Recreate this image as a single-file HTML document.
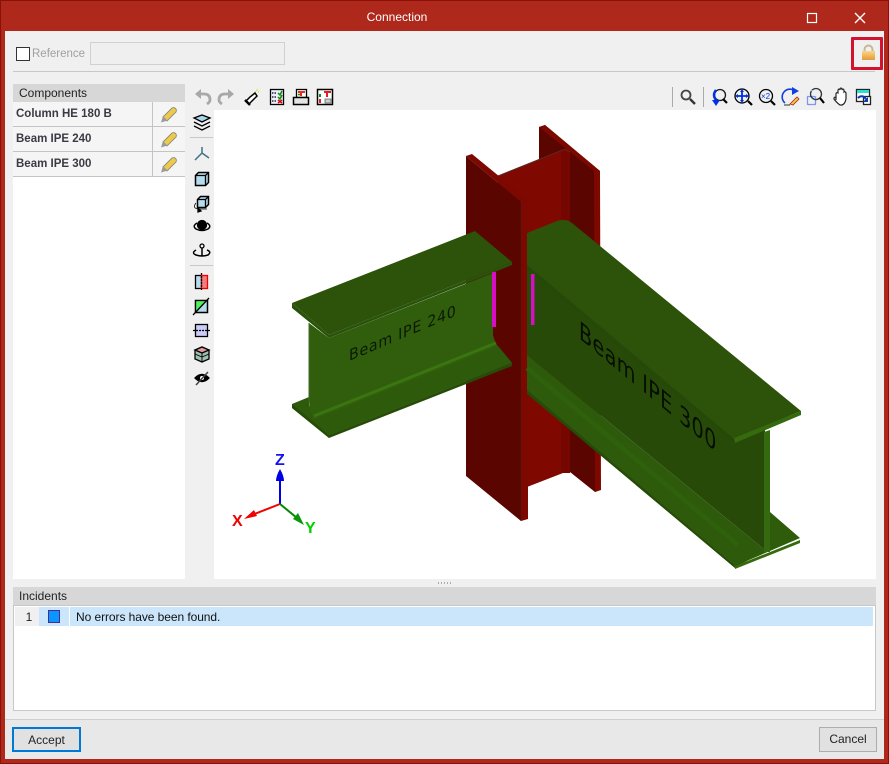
<!DOCTYPE html>
<html><head><meta charset="utf-8"><title>Connection</title>
<style>
html,body{margin:0;padding:0;width:889px;height:764px;overflow:hidden;background:#ae281c;font-family:"Liberation Sans",sans-serif;font-size:12px;color:#222}
div{position:absolute;box-sizing:border-box;white-space:nowrap}
svg{position:absolute;overflow:visible}
.row{left:13px;width:172px;height:25px;background:#f5f5f5;border-bottom:1px solid #c4c4c4;font-weight:bold;font-size:11.5px;color:#3a3a44;line-height:25px;padding-left:3px}
.vs{width:1px;background:#aaa}
.btn{background:#e1e1e1;text-align:center;color:#222}
</style></head><body>
<div style="left:0;top:0;width:889px;height:764px;border:1px solid #8c100a;background:#ae281c"></div>
<div style="left:0;top:1px;width:794px;text-align:center;color:#fff;line-height:33px;height:33px">Connection</div>
<svg style="left:0;top:0" width="889" height="764">
<rect x="807.5" y="13.5" width="9" height="9" fill="none" stroke="#fff" stroke-width="1.2"/>
<path d="M855 13L865 23M865 13L855 23" stroke="#fff" stroke-width="1.4" fill="none"/>
</svg>
<div style="left:5px;top:31px;width:879px;height:728px;background:#f0f0f0"></div>
<!-- top row -->
<div style="left:16px;top:47px;width:14px;height:14px;border:1px solid #333;background:#fff"></div>
<div style="left:32px;top:47px;color:#a0a0a0;line-height:14px;font-size:11.5px">Reference</div>
<div style="left:90px;top:42px;width:195px;height:23px;border:1px solid #d0d0d0;background:#efefef"></div>
<div style="left:13px;top:71px;width:862px;height:1px;background:#c8c8c8"></div>
<div style="left:851px;top:37px;width:32px;height:33px;border:3px solid #d3132d;border-radius:1px"></div>
<svg style="left:0;top:0" width="889" height="764">
<defs><linearGradient id="lk" x1="0" x2="0" y1="0" y2="1"><stop offset="0" stop-color="#fbd58b"/><stop offset="1" stop-color="#e59a37"/></linearGradient></defs>
<path d="M864.500 51V49.500a4 4 0 0 1 8 0V51" fill="none" stroke="#c4b79c" stroke-width="2"/>
<rect x="862" y="51" width="13" height="9" fill="url(#lk)"/>
</svg>
<!-- components -->
<div style="left:13px;top:84px;width:172px;height:18px;background:#d7d7d7;padding-left:6px;line-height:18px;color:#222">Components</div>
<div style="left:13px;top:102px;width:172px;height:477px;background:#fff"></div>
<div class="row" style="top:102px">Column HE 180 B</div>
<div class="row" style="top:127px">Beam IPE 240</div>
<div class="row" style="top:152px">Beam IPE 300</div>
<div style="left:152px;top:102px;width:1px;height:75px;background:#c4c4c4"></div>
<svg style="left:0;top:0" width="889" height="764">
<g id="p1"><path d="M163 117L172 108Q174 107 175.500 108.500Q177 110 176 112L167 121Z" fill="#eecb45" stroke="#8a8a8a" stroke-width=".9"/><path d="M161 122.500L163 116L167.500 120.500Z" fill="#9a9a9a"/></g>
<use href="#p1" y="25"/><use href="#p1" y="50"/>
</svg>
<!-- viewport -->
<div style="left:214px;top:110px;width:662px;height:469px;background:#fff"></div>
<svg style="left:0;top:0" width="889" height="764" font-family="'DejaVu Sans',sans-serif">
<!-- column back flange -->
<polygon points="539,127 545,125 600,171 600,490 595,492 570,472 539,440" fill="#5a0500"/>
<polygon points="594,171 600,171 601,490 595,492" fill="#7c0800"/>
<polygon points="545,125 600,171 594,171 539,127" fill="#7c0800"/>
<!-- web -->
<polygon points="498,176 565,149 570,152 570,472 563,473 527,487 498,490" fill="#7f0800"/>
<polygon points="561,150 570,152 570,473 561,473" fill="#760700"/>
<path d="M498,176 L565,149 L570,152" stroke="#5a2a22" stroke-width="1" fill="none"/>
<!-- column front flange -->
<polygon points="466,156 472,154 528,200 521,202" fill="#7c0800"/>
<polygon points="466,156 521,202 521,521 466,476" fill="#5a0500"/>
<polygon points="521,202 528,200 528,519 521,521" fill="#7c0800"/>
<path d="M521,202V521" stroke="#4d1b14" stroke-width=".6"/>
<!-- beam 240 -->
<polygon points="292,404 309,397 309,405 313,418 329,435 329,438 292,408" fill="#2e5a0b"/>
<polygon points="292,404 329,435 329,438 292,408" fill="#274c08"/>
<path d="M309,323 L329,338 L493,273 L493,335 Q495,345 503,352 L512,363 L329,435 L314,420 Q309,412 309,400 Z" fill="#315e0c"/>
<path d="M314,420 L329,435 L512,363 L503,352 L498,346 Z" fill="#2d5a0b"/>
<path d="M314,416 L496,343" stroke="#3b7511" stroke-width="3" fill="none"/>
<polygon points="329,435 512,363 512,366 329,438" fill="#274c08"/>
<path d="M309,323V402" stroke="#436a2e" stroke-width="1"/>
<polygon points="292,303 475,231 512,262 329,335" fill="#2c5309"/>
<polygon points="292,303 329,335 512,262 512,265 329,338 292,308" fill="#2a520a"/>
<text transform="matrix(.92,-.39,0,1,349,361)" font-size="15.500" fill="#0b1a04" letter-spacing=".75">Beam IPE 240</text>
<rect x="492" y="272" width="4" height="55" fill="#d60fc4"/>
<!-- beam 300 -->
<polygon points="527,255 740,434 765,425 765,550 527,355" fill="#274a09"/>
<polygon points="527,355 765,550 735,568 527,392" fill="#2d5a0b"/>
<path d="M527,368 L738,545" stroke="#2f600b" stroke-width="5" fill="none"/>
<polygon points="527,390 734,565 735,568 527,394" fill="#264a08"/>
<polygon points="527,262 734,436 735,444 527,270" fill="#264808"/>
<polygon points="770,512 800,538 735,566 764,548 770,546" fill="#2e5c0b"/>
<polygon points="764,432 770,430 770,552 764,552" fill="#366a10"/>
<polygon points="735,566 800,540 800,543 735,569" fill="#356a0e"/>
<path d="M527,233 L557,221 Q565,218 572,223 L801,411 L734,439 L527,265 Z" fill="#2c5309"/>
<polygon points="734,438 801,411 801,415 735,443" fill="#356a0e"/>
<text transform="matrix(.77,.64,0,1,579,338)" font-size="25" fill="#060e02" letter-spacing=".4">Beam IPE 300</text>
<rect x="531" y="274" width="3.500" height="51" fill="#d60fc4"/>
<!-- axes -->
<g font-family="'Liberation Sans',sans-serif" font-weight="bold">
<path d="M280,504V478" stroke="#0000e6" stroke-width="2"/><path d="M280,469Q284,476 284,481H276Q276,476 280,469Z" fill="#0000e6"/>
<text x="275" y="465" font-size="16" fill="#1414f0">Z</text>
<path d="M280,504L252,515" stroke="#f00000" stroke-width="2"/><path d="M244,519L254,510L257,516Z" fill="#f00000"/>
<text x="232" y="526" font-size="16" fill="#f00000">X</text>
<path d="M280,504L297,518" stroke="#008a00" stroke-width="2"/><path d="M304,525L293,519L298,513Z" fill="#0a960a"/>
<text x="305" y="533" font-size="16" fill="#00d000">Y</text>
</g>
</svg>
<!-- toolbar separators -->
<div class="vs" style="left:672px;top:87px;height:20px"></div>
<div class="vs" style="left:703px;top:87px;height:20px"></div>
<div style="left:190px;top:137px;width:23px;height:1px;background:#c8c8c8"></div>
<div style="left:190px;top:265px;width:23px;height:1px;background:#c8c8c8"></div>
<svg style="left:0;top:0" width="889" height="764" fill="none" stroke="#000" stroke-width="1.300">
<!-- undo/redo -->
<path d="M200,94H204Q210,94 210,100Q210,102 207,104" stroke="#a8a8a8" stroke-width="2.800"/><path d="M195,94L201,89V99Z" fill="#a8a8a8" stroke="none"/>
<path d="M229,94H225Q219,94 219,100Q219,102 222,104" stroke="#a8a8a8" stroke-width="2.800"/><path d="M234,94L228,89V99Z" fill="#a8a8a8" stroke="none"/>
<!-- brush -->
<path d="M246,101L250,97L255,93L257,96L253,100L249,104Z" fill="#fff" stroke-width="1.500"/><path d="M245,100L250,105" stroke-width="2.400"/><path d="M255,92L258,89M258,92L260,91" stroke="#d8d020" stroke-dasharray="1 1"/>
<!-- list -->
<rect x="270.500" y="89.500" width="13" height="15" fill="#eef"/><path d="M272,93H276M272,97H276M272,101H276" stroke-dasharray="1.500 1"/><path d="M278,93L280,95L282,91M278,97L280,99L282,95" stroke="#0a8a0a" stroke-width="1.500"/><path d="M278,100L282,103M282,100L278,103" stroke="#e00000" stroke-width="1.500"/>
<!-- printer -->
<rect x="296.500" y="89.500" width="10" height="8" fill="#fff"/><path d="M298,92H305M301,92V96" stroke="#e03020" stroke-width="2"/><path d="M298,94.500l2,0" stroke="#0a8a0a" stroke-width="1.500"/><rect x="293.500" y="97.500" width="15" height="7" fill="#e4e4e4" stroke-width="1.500"/>
<!-- plan -->
<rect x="317.500" y="89.500" width="15" height="15" fill="#fff" stroke-width="1.500"/><path d="M324,92H331M327,92V97" stroke="#e02020" stroke-width="2"/><path d="M320,94V97" stroke="#0a8a3a" stroke-width="2"/><path d="M320,99V103" stroke="#e02020" stroke-width="2"/><rect x="325" y="99" width="6" height="4" fill="#ccc" stroke="#555" stroke-width=".7"/>
<!-- magnifier -->
<circle cx="686" cy="95" r="4.500" stroke="#444" stroke-width="1.800"/><path d="M690,99L695,104" stroke="#333" stroke-width="2.400"/>
<!-- view right -->
<circle cx="720" cy="95" r="5.500" stroke="#1a1a1a"/><path d="M723,99L727,103" stroke-width="2.200"/><path d="M716,90Q712,95 716,100" stroke="#0030e0" stroke-width="2.400"/><path d="M712,100L720,100L716,106Z" fill="#0030e0" stroke="none"/>
<circle cx="742" cy="96" r="7"/><path d="M748,101L752,105" stroke-width="2.200"/><path d="M742,91V101M737,96H747" stroke="#0030e0" stroke-width="1.800"/>
<path d="M742,89l-2,3h4zM742,103l-2,-3h4zM735,96l3,-2v4zM749,96l-3,-2v4z" fill="#0030e0" stroke="none"/>
<circle cx="766" cy="96" r="6.500"/><path d="M771,101L775,105" stroke-width="2.200"/><text x="761" y="99" font-size="8" fill="#0040d0" stroke="none" font-family="'Liberation Sans',sans-serif">×2</text>
<path d="M785,103A6.500,6.500 0 1 1 795,91" stroke="#1040e0" stroke-width="1.600"/><path d="M792,87L799,91L792,95Z" fill="#1040e0" stroke="none"/><path d="M790,104L797,97L799,99L793,105Z" fill="#eecb45" stroke="#b02020" stroke-width=".8"/><path d="M784,105H790" stroke-width=".8"/>
<circle cx="816" cy="94" r="5.500" stroke="#333"/><path d="M820,98L824,103" stroke-width="2.200"/><rect x="807.500" y="96.500" width="8" height="8" stroke="#1040e0" stroke-dasharray="1 1"/><path d="M811,90L820,92L815,97Z" fill="#e8f0f8" stroke="none"/>
<path d="M836,100V94Q836,92 838,93V90Q839,88 840,90V89Q841,87 842,89V90Q843,88 844,90V92Q845,91 846,93V99Q845,104 842,105H840Q837,103 834,99Q834,96 836,98" fill="#fff" stroke="#222" stroke-width="1.200"/>
<rect x="856.500" y="89.500" width="13" height="12" fill="#fff" stroke="#222"/><rect x="857" y="90" width="12" height="3" fill="#28e0d8" stroke="none"/><rect x="863.500" y="96.500" width="7" height="8" fill="#fff" stroke="#222"/><path d="M858,98Q862,94 866,99" stroke="#0a3bb0" stroke-width="2"/><path d="M868,102L863,102L868,97Z" fill="#0a3bb0" stroke="none"/>
<!-- left tools -->
<path d="M194,118L202,115L210,118L202,122Z" fill="#a9d6ea"/><path d="M194,122L202,126L210,122M194,126L202,130L210,126" stroke="#000"/>
<path d="M202,153V147M202,153L195,160M202,153L209,158" stroke="#43708a" stroke-width="1.500"/>
<g id="cube"><path d="M195.500,175.500L198.500,172.500H208.500V182.500L205.500,185.500H195.500Z" fill="#b5dcec" stroke-width="1.500"/><path d="M195.500,175.500H205.500V185.500M205.500,175.500L208.500,172.500"/></g>
<path d="M197.500,199.500L200.500,196.500H208.500V204.500L205.500,207.500H197.500Z" fill="#b5dcec" stroke-width="1.500"/><path d="M197.500,199.500H205.500V207.500M205.500,199.500L208.500,196.500"/><path d="M196,203Q192,208 198,209H207" stroke-width=".8"/><path d="M201,211l-3,-3v4z" fill="#000"/>
<circle cx="202" cy="225" r="4.500" fill="#000"/><path d="M197,223Q192,226 196,229Q202,232 208,229Q212,226 207,223" stroke-width="1.500"/>
<circle cx="202" cy="246" r="2"/><path d="M202,248V256M196,250Q191,253 196,255Q202,257 208,255Q212,252 207,250" stroke-width="1.500"/>
<rect x="195.500" y="275.500" width="6" height="13" fill="#b5dcec"/><rect x="201.500" y="275.500" width="6" height="13" fill="#f08080" stroke="#f00000"/><path d="M201.500,273V291" stroke-dasharray="2 1"/>
<rect x="195.500" y="300.500" width="12" height="12" fill="#b5dcec"/><polygon points="196,300 207,300 196,312" fill="#50f060" stroke="none"/><path d="M193,315L209,298"/><rect x="195.500" y="300.500" width="12" height="12"/>
<rect x="195.500" y="324.500" width="12" height="12" fill="#ccccf8"/><path d="M193,330.500H210" stroke-dasharray="2 1"/>
<path d="M202,347L209,350V359L202,362L195,359V350Z" fill="#9ec0b0"/><path d="M195,350L202,353L209,350L202,347Z" fill="#e09aa0"/><path d="M195,354L202,357L209,354M202,353V362" stroke-width=".9"/>
<path d="M195,378Q202,371 209,378Q202,385 195,378Z" fill="#000"/><circle cx="202" cy="378" r="2" fill="#fff" stroke="none"/><path d="M196,385L208,372" stroke="#444" stroke-width="1.500"/>
</svg>
<!-- splitter dots -->
<div style="left:438px;top:582px;width:13px;height:2px;background:repeating-linear-gradient(90deg,#aaa 0 1px,transparent 1px 3px)"></div>
<!-- incidents -->
<div style="left:13px;top:587px;width:863px;height:18px;background:#d7d7d7;padding-left:6px;line-height:18px;color:#222">Incidents</div>
<div style="left:13px;top:605px;width:863px;height:106px;background:#fff;border:1px solid #c8c8c8"></div>
<div style="left:15px;top:607px;width:24px;height:19px;background:#f0f0f0;text-align:center;line-height:21px;padding-left:4px">1</div>
<div style="left:39px;top:607px;width:30px;height:19px;background:#cbe6fb"></div>
<div style="left:48px;top:610px;width:12px;height:13px;background:#0a96ff;border:1px solid #4a2a90"></div>
<div style="left:70px;top:607px;width:803px;height:19px;background:#cbe6fb;line-height:21px;padding-left:6px;color:#111;letter-spacing:-.07px">No errors have been found.</div>
<!-- footer -->
<div style="left:5px;top:719px;width:879px;height:40px;background:#e8e8e8;border-top:1px solid #cfcfcf"></div>
<div class="btn" style="left:12px;top:727px;width:69px;height:25px;border:2px solid #0078d7;line-height:22px">Accept</div>
<div class="btn" style="left:819px;top:727px;width:58px;height:25px;border:1px solid #adadad;line-height:23px">Cancel</div>
</body></html>
